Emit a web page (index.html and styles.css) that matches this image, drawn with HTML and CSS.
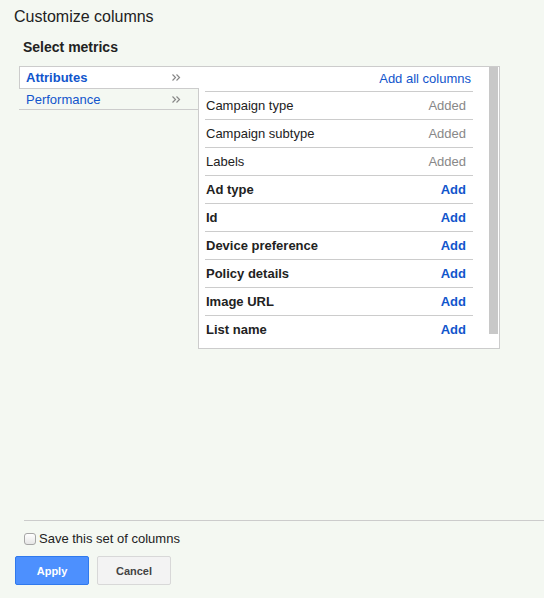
FILE: index.html
```html
<!DOCTYPE html>
<html>
<head>
<meta charset="utf-8">
<link rel="stylesheet" href="styles.css">
</head>
<body>
<div class="page">
  <h1 class="title">Customize columns</h1>
  <h2 class="section-title">Select metrics</h2>
  <div class="picker">
    <div class="menu">
      <div class="menu-item active"><span>Attributes</span><svg class="chev" width="9" height="7" viewBox="0 0 9 7"><path d="M0.5 0.5 L3.5 3.5 L0.5 6.5 M4.5 0.5 L7.5 3.5 L4.5 6.5" fill="none" stroke="#888" stroke-width="1.2"/></svg></div>
      <div class="menu-item"><span>Performance</span><svg class="chev" width="9" height="7" viewBox="0 0 9 7"><path d="M0.5 0.5 L3.5 3.5 L0.5 6.5 M4.5 0.5 L7.5 3.5 L4.5 6.5" fill="none" stroke="#888" stroke-width="1.2"/></svg></div>
    </div>
    <div class="panel">
      <div class="list">
        <div class="list-head"><a class="link">Add all columns</a></div>
        <div class="row"><span>Campaign type</span><span class="added">Added</span></div>
        <div class="row"><span>Campaign subtype</span><span class="added">Added</span></div>
        <div class="row"><span>Labels</span><span class="added">Added</span></div>
        <div class="row strong"><span>Ad type</span><a class="add">Add</a></div>
        <div class="row strong"><span>Id</span><a class="add">Add</a></div>
        <div class="row strong"><span>Device preference</span><a class="add">Add</a></div>
        <div class="row strong"><span>Policy details</span><a class="add">Add</a></div>
        <div class="row strong"><span>Image URL</span><a class="add">Add</a></div>
        <div class="row strong"><span>List name</span><a class="add">Add</a></div>
      </div>
      <div class="scrollbar"></div>
    </div>
  </div>
  <div class="footer">
    <div class="footer-line"></div>
    <label class="save"><input type="checkbox" class="check"><span>Save this set of columns</span></label>
    <div class="buttons">
      <button class="btn btn-primary">Apply</button>
      <button class="btn btn-default">Cancel</button>
    </div>
  </div>
</div>
</body>
</html>
```

FILE: styles.css
```css
* { box-sizing: border-box; }
html, body { margin: 0; padding: 0; }
body {
  background: #f4f8f2;
  font-family: "Liberation Sans", Arial, sans-serif;
  font-size: 13px;
  color: #222;
}
.page {
  height: 598px;
  display: flex;
  flex-direction: column;
}
.title {
  margin: 0;
  padding: 7px 0 0 14px;
  font-size: 16px;
  line-height: 19px;
  font-weight: normal;
  color: #222;
}
.section-title {
  margin: 0;
  padding: 13px 0 0 23px;
  font-size: 14px;
  line-height: 17px;
  font-weight: bold;
  color: #222;
}
.picker {
  display: flex;
  align-items: flex-start;
  margin: 10px 0 0 19px;
}
.menu {
  width: 180px;
  flex-shrink: 0;
  position: relative;
  z-index: 1;
}
.menu-item {
  display: flex;
  justify-content: space-between;
  align-items: center;
  padding: 0 18px 0 7px;
  height: 21px;
  color: #15c;
  border-bottom: 1px solid #ccc;
}
.menu-item.active {
  height: 23px;
  background: #fff;
  font-weight: bold;
  border-top: 1px solid #ccc;
  border-left: 1px solid #ccc;
  padding-left: 6px;
}
.chev { display: block; }
.panel {
  margin-left: -1px;
  width: 302px;
  height: 283px;
  background: #fff;
  border: 1px solid #ccc;
  display: flex;
  align-items: flex-start;
}
.list {
  margin-left: 6px;
  width: 268px;
}
.list-head {
  height: 25px;
  line-height: 24px;
  border-bottom: 1px solid #ccc;
  text-align: right;
  padding-right: 2px;
}
.link, .add { color: #15c; text-decoration: none; }
.row {
  height: 28px;
  display: flex;
  justify-content: space-between;
  align-items: center;
  padding: 0 7px 0 1px;
  border-bottom: 1px solid #ccc;
}
.row:last-child { border-bottom: none; height: 27px; }
.row.strong { font-weight: bold; }
.added { color: #888; }
.scrollbar {
  margin-left: 16px;
  width: 9px;
  height: 267px;
  background: #c8c8c8;
}
.footer {
  margin-top: auto;
  padding-bottom: 13px;
}
.footer-line {
  margin-left: 24px;
  border-top: 1px solid #ccc;
}
.save {
  display: flex;
  align-items: center;
  margin-top: 10px;
  padding-left: 24px;
  height: 16px;
  line-height: 16px;
  color: #222;
}
.check {
  appearance: none;
  -webkit-appearance: none;
  width: 12px;
  height: 12px;
  margin: 0 3px 0 0;
  border: 1px solid #a6a6a6;
  border-radius: 3px;
  background: linear-gradient(#fff, #e6e6e6);
}
.buttons {
  display: flex;
  gap: 8px;
  margin-top: 9px;
  padding-left: 15px;
}
.btn {
  width: 74px;
  height: 29px;
  border-radius: 2px;
  font-family: "Liberation Sans", Arial, sans-serif;
  font-size: 11px;
  font-weight: bold;
  padding: 0;
}
.btn-primary {
  background: #4d90fe;
  border: 1px solid #3079ed;
  color: #fff;
}
.btn-default {
  background: #f3f3f3;
  border: 1px solid #d8d8d8;
  color: #444;
}
```
